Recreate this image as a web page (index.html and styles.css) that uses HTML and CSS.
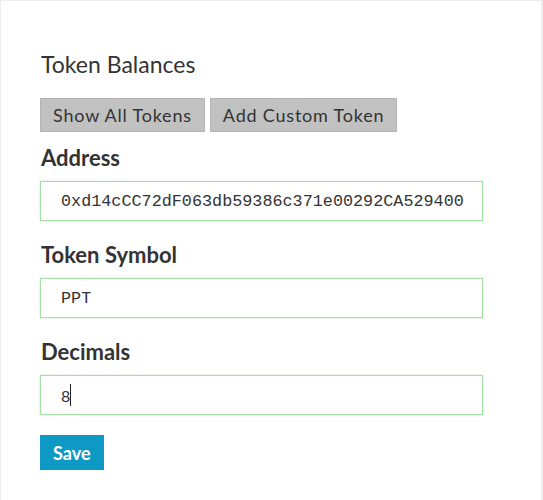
FILE: index.html
```html
<!DOCTYPE html>
<html lang="en">
<head>
    <meta charset="UTF-8">
    <meta name="viewport" content="width=device-width, initial-scale=1.0">
    <title>Token Balances</title>
    <link rel="stylesheet" href="styles.css">
</head>
<body>
    <div class="panel">
        <h2 class="title">Token Balances</h2>

        <div class="tabs">
            <button class="tab">Show All Tokens</button>
            <button class="tab">Add Custom Token</button>
        </div>

        <div class="field">
            <label for="address">Address</label>
            <input type="text" id="address" class="mono" value="0xd14cCC72dF063db59386c371e00292CA529400">
        </div>

        <div class="field">
            <label for="symbol">Token Symbol</label>
            <input type="text" id="symbol" class="mono" value="PPT">
        </div>

        <div class="field">
            <label for="decimals">Decimals</label>
            <div class="input-wrap">
                <input type="text" id="decimals" value="8">
                <span class="caret"></span>
            </div>
        </div>

        <button class="save">Save</button>
    </div>
</body>
</html>
```

FILE: styles.css
```css
body {
    margin: 0;
    padding: 1px 2px 0 1px;
    background: #eeeeee;
    font-family: 'Lato', 'Open Sans', sans-serif;
    color: #333;
}

.panel {
    background: #ffffff;
    min-height: 499px;
    padding: 49px 39px 0 39px;
    box-sizing: border-box;
}

.title {
    font-size: 23px;
    font-weight: normal;
    margin: 0 0 20px 1px;
    line-height: 28px;
}

.tabs {
    display: flex;
    gap: 5px;
    margin-bottom: 12px;
}

.tab {
    font-family: 'Lato', sans-serif;
    font-size: 18px;
    letter-spacing: 0.8px;
    color: #333;
    background: #c1c1c1;
    border: 1px solid #b4b4b4;
    height: 34px;
    padding: 0 12px;
}

.field {
    margin-bottom: 20px;
}

label {
    display: block;
    font-size: 22px;
    font-weight: bold;
    line-height: 28px;
    margin: 0 0 9px 1px;
}

.input-wrap {
    position: relative;
}

input {
    display: block;
    width: 443px;
    height: 40px;
    box-sizing: border-box;
    border: 1px solid #a6dfa6;
    box-shadow: 0 0 2px rgba(120, 200, 120, 0.4);
    padding: 0 8px 0 20px;
    font-size: 16px;
    font-family: 'Lato', sans-serif;
    color: #333;
    outline: none;
}

input.mono {
    font-family: 'Liberation Mono', monospace;
    font-size: 16.8px;
}

.caret {
    position: absolute;
    left: 30px;
    top: 9px;
    width: 1px;
    height: 22px;
    background: #222;
}

.save {
    display: block;
    background: #0e98c4;
    color: #fff;
    border: none;
    font-family: 'Lato', sans-serif;
    font-weight: bold;
    font-size: 18px;
    height: 35px;
    padding: 0 13px;
}
```
